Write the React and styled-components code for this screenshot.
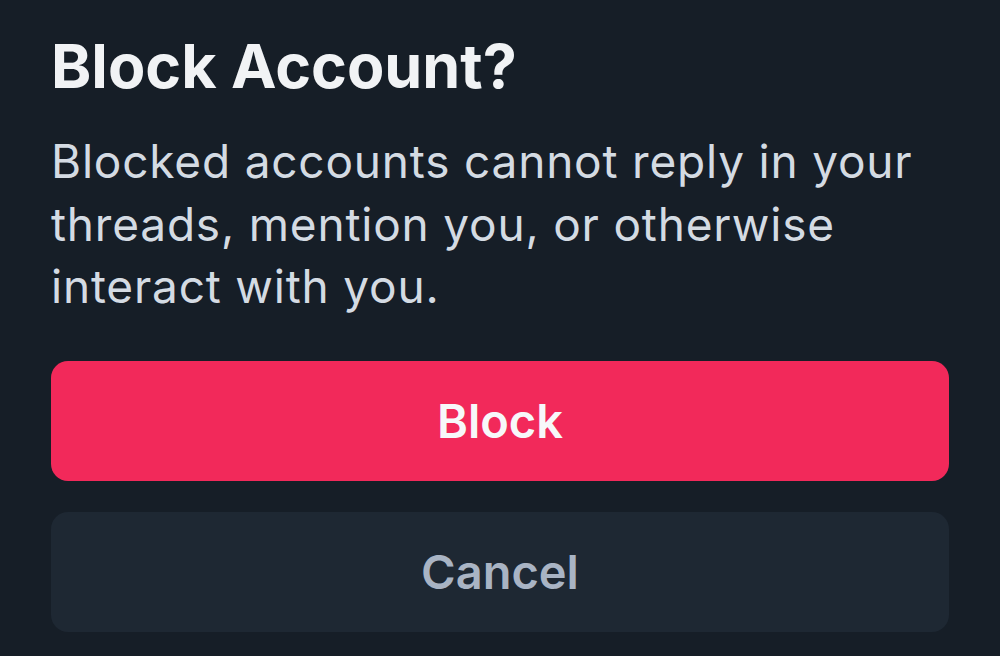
import React from "react";
import styled, { createGlobalStyle } from "styled-components";

const GlobalStyle = createGlobalStyle`
  html, body {
    margin: 0;
    padding: 0;
    background-color: #161e27;
  }
  body {
    font-family: Inter, "Noto Sans", sans-serif;
  }
`;

export default function App() {
  return (
    <>
      <GlobalStyle />
      <Dialog>
        <Title>Block Account?</Title>
        <Message>
          Blocked accounts cannot reply in your threads, mention you, or
          otherwise interact with you.
        </Message>
        <Actions>
          <ActionButton $variant="danger">Block</ActionButton>
          <ActionButton $variant="secondary">Cancel</ActionButton>
        </Actions>
      </Dialog>
    </>
  );
}

// CSS
const Dialog = styled.div`
  width: 1000px;
  height: 656px;
  box-sizing: border-box;
  padding: 30px 51px 0;
  display: flex;
  flex-direction: column;
  background-color: #161e27;
  overflow: hidden;
`;

const Title = styled.h1`
  margin: 0;
  font-size: 61px;
  line-height: 72px;
  font-weight: 700;
  color: #f1f3f5;
`;

const Message = styled.p`
  margin: 28px 0 0;
  font-size: 46px;
  line-height: 62.5px;
  font-weight: 400;
  letter-spacing: 0.8px;
  color: #d4dbe3;
`;

const Actions = styled.div`
  margin-top: 43px;
  display: flex;
  flex-direction: column;
  gap: 31px;
`;

const ActionButton = styled.button`
  height: 120px;
  width: 100%;
  border: none;
  border-radius: 17px;
  display: flex;
  align-items: center;
  justify-content: center;
  font-family: Inter, "Noto Sans", sans-serif;
  font-size: 47px;
  font-weight: 600;
  cursor: pointer;
  background-color: ${(p) => (p.$variant === "danger" ? "#f2295a" : "#1e2833")};
  color: ${(p) => (p.$variant === "danger" ? "#f7f8fa" : "#a9b4c4")};
`;
